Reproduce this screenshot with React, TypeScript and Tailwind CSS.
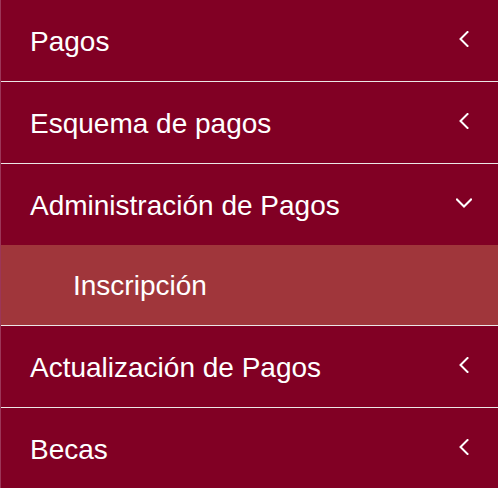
import React from "react";

const ChevronLeft = () => (
  <svg width="10" height="16" viewBox="0 0 10 16" fill="none">
    <polyline points="8.5,1 1.5,8 8.5,15" stroke="white" strokeWidth="2" strokeLinecap="square" strokeLinejoin="miter" />
  </svg>
);

const ChevronDown = () => (
  <svg width="16" height="10" viewBox="0 0 16 10" fill="none">
    <polyline points="1,1.5 8,8.5 15,1.5" stroke="white" strokeWidth="2" strokeLinecap="square" strokeLinejoin="miter" />
  </svg>
);

type Item = { label: string; open?: boolean; children?: string[] };

const items: Item[] = [
  { label: "Pagos" },
  { label: "Esquema de pagos" },
  { label: "Administración de Pagos", open: true, children: ["Inscripción"] },
  { label: "Actualización de Pagos" },
  { label: "Becas" },
];

export default function App() {
  return (
    <div
      className="w-[498px] h-[488px] overflow-hidden bg-[#810024] border-l border-[#9c3558] text-white"
      style={{ fontFamily: '"Liberation Sans", Arial, sans-serif' }}
    >
      {items.map((it) => (
        <div key={it.label} className={it.open ? "" : "border-b border-[#ece6e6]"}>
          <div className="h-[81px] flex items-center justify-between pl-[29px] pr-[26px]">
            <span className="text-[28px] leading-none pt-[2px]">{it.label}</span>
            <span className="w-[16px] flex items-center justify-center -mt-[4px]">
              {it.open ? <ChevronDown /> : <ChevronLeft />}
            </span>
          </div>
          {it.open &&
            it.children?.map((c) => (
              <div
                key={c}
                className="h-[81px] flex items-center bg-[#a0363b] pl-[72px] border-b border-[#ece6e6]"
              >
                <span className="text-[28px] leading-none pt-[2px]">{c}</span>
              </div>
            ))}
        </div>
      ))}
    </div>
  );
}
